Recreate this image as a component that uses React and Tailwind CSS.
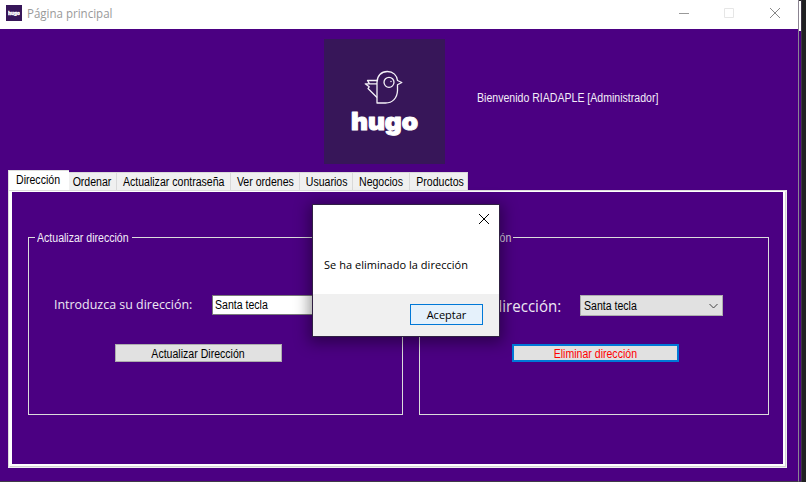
const tabs = [
  { name: 'Ordenar', width: 'w-[48px] pr-px' },
  { name: 'Actualizar contraseña', width: 'w-[114px]' },
  { name: 'Ver ordenes', width: 'w-[69px]' },
  { name: 'Usuarios', width: 'w-[53px] pl-[2px]' },
  { name: 'Negocios', width: 'w-[57px]' },
  { name: 'Productos', width: 'w-[58px] pl-[3px]' },
];

// Condensed lettering of the classic desktop controls.
function Narrow({ children, origin = 'origin-center' }) {
  return <span className={`inline-block scale-x-[0.88] whitespace-nowrap ${origin}`}>{children}</span>;
}

function TitleBar() {
  return (
    <header className="flex h-[29px] shrink-0 items-center bg-white pl-[6px] font-['Open_Sans',sans-serif]">
      <span className="mb-[3px] flex size-[16px] items-center justify-center bg-[#371659]">
        <svg width="12" height="6" viewBox="0 0 12 6" aria-hidden="true">
          <text x="0" y="4.500" textLength="12" lengthAdjust="spacingAndGlyphs" fill="#fff" stroke="#fff" strokeWidth=".3" fontSize="4.500" fontWeight="900" fontFamily="Inter">hugo</text>
        </svg>
      </span>
      <span className="mb-[2px] ml-[5px] flex-1 origin-left scale-x-[0.96] text-[12px] leading-[16px] text-[#999]">Página principal</span>
      <svg className="mr-[16px] mb-[3px]" width="103" height="12" viewBox="0 0 103 12" fill="none" aria-hidden="true">
        <path d="M0 6.5h10" stroke="#999" />
        <path d="M45.500 1.500h9v9h-9z" stroke="#e6e6e6" />
        <path d="M91 1l10 10M101 1L91 11" stroke="#888" />
      </svg>
    </header>
  );
}

function Logo() {
  return (
    <div className="ml-[324px] h-[125px] w-[121px] bg-[#371659]">
      <svg width="121" height="125" viewBox="324 39 121 125" fill="none" aria-hidden="true">
        <g stroke="#f5f1f8" strokeWidth="1.3" strokeLinejoin="round">
          <path d="M377 103V82.500c0-6.500 4.200-11 10.300-11 6 0 9.700 4 10.200 9l4.300 2-4.300 2.300v6c-.3 7.200-5 12.200-12 12.200z" />
          <circle cx="389" cy="82.300" r="5" />
          <path d="M377 80.500h-9.500l2 3.300h7.500M369.500 83.800h-4.300l4 3-1.200 1.700 9 9" />
        </g>
        <circle cx="391" cy="81.500" r=".7" fill="#fff" />
        <text x="351" y="129.500" textLength="67" lengthAdjust="spacingAndGlyphs" fill="#fff" stroke="#fff" strokeWidth="1" strokeLinejoin="round" fontSize="24" fontWeight="900" fontFamily="Inter">hugo</text>
      </svg>
    </div>
  );
}

function Dialog() {
  return (
    <div role="dialog" className="absolute top-[204px] left-[312px] flex h-[133px] w-[188px] flex-col border border-[#302043] bg-white font-['Open_Sans',sans-serif] text-black shadow-[0_3px_14px_3px_rgba(0,0,0,0.4)]">
      <div className="flex h-[29px] items-center justify-end pr-[9px]">
        <svg className="mb-px" width="12" height="12" viewBox="0 0 12 12" aria-hidden="true">
          <path d="M1 1l10 10M11 1L1 11" stroke="#000" />
        </svg>
      </div>
      <p className="flex-1 pt-[23px] pl-[11px] text-[11px] leading-[16px] tracking-[0.03px] whitespace-nowrap">Se ha eliminado la dirección</p>
      <div className="flex h-[42px] items-start justify-end bg-[#f0f0f0] pt-[10px] pr-[16px]">
        <button className="h-[21px] w-[73px] border border-[#0078d7] bg-[#e5f1fb] text-[11px] leading-[19px]">Aceptar</button>
      </div>
    </div>
  );
}

export default function App() {
  return (
    <div className="relative flex h-[482px] w-[806px] overflow-hidden bg-[#202022] font-['Liberation_Sans',Arial,sans-serif] text-[12px] leading-[14px]">
      <div className="flex w-[798px] flex-col border-b border-[#403a48] bg-[#4b0082]">
        <TitleBar />
        <div className="mt-[10px] flex h-[125px] shrink-0">
          <Logo />
          <p className="mt-[52px] ml-[32px] whitespace-nowrap text-[#f3edf8]"><Narrow origin="origin-left">Bienvenido RIADAPLE [Administrador]</Narrow></p>
        </div>
        <nav className="mt-[6px] ml-[8px] flex h-[20px] shrink-0 items-end whitespace-nowrap text-black">
          <div className="flex h-[20px] w-[61px] justify-center border-t border-l border-[#dcdcdc] bg-white pt-[2px] pr-[2px]"><Narrow>Dirección</Narrow></div>
          {tabs.map((tab) => (
            <div key={tab.name} className={`flex h-[18px] justify-center border-t border-r border-[#d9d9d9] bg-[#f0f0f0] pt-[2px] ${tab.width}`}><Narrow>{tab.name}</Narrow></div>
          ))}
        </nav>
        <main className="ml-[8px] h-[278px] w-[779px] shrink-0 border border-r-2 border-b-2 border-[#dcdcdc] border-r-[#f0f0f0] border-b-[#f0f0f0]">
          <div className="h-full border-t border-r-2 border-b-2 border-l-[3px] border-white shadow-[1px_1px_0_#d4d4d4]">
            <div className="flex h-full gap-[16px] pt-[39px] pl-[16px]">
              <fieldset className="h-[184px] w-[375px] border border-[#dcdcdc]">
                <legend className="ml-[6px] h-[13px] w-[97px] pl-[2px] whitespace-nowrap text-[#f3edf8]"><Narrow origin="origin-left">Actualizar dirección</Narrow></legend>
                <div className="mt-[51px] flex h-[19px] items-center pl-[25px]">
                  <label className="mb-[2px] w-[158px] font-['Open_Sans',sans-serif] text-[13px] leading-[18px] whitespace-nowrap text-[#eee8f4]">
                    <span className="inline-block origin-left scale-x-[0.957]">Introduzca su dirección:</span>
                  </label>
                  <div className="flex h-[20px] w-[144px] items-center border border-[#7a7a7a] bg-white pl-[2px] text-black"><Narrow origin="origin-left">Santa tecla</Narrow></div>
                </div>
                <button className="mt-[30px] ml-[86px] flex h-[18px] w-[167px] justify-center border border-[#adadad] bg-[#e1e1e1] pt-[2px] text-black"><Narrow>Actualizar Dirección</Narrow></button>
              </fieldset>
              <fieldset className="h-[184px] w-[350px] border border-[#dcdcdc]">
                <legend className="ml-[6px] h-[13px] w-[87px] pl-[2px] whitespace-nowrap text-[#d8cde1]"><Narrow origin="origin-left">Eliminar dirección</Narrow></legend>
                <div className="mt-[51px] flex h-[21px] items-center">
                  <label className="flex w-[141px] justify-end font-['Open_Sans',sans-serif] text-[16px] leading-[20px] whitespace-nowrap text-[#eee8f4]">
                    <span className="inline-block origin-right scale-x-[0.94]">Su dirección:</span>
                  </label>
                  <div className="ml-[19px] flex h-[21px] w-[143px] items-center justify-between border border-[#adadad] bg-[#e1e1e1] pr-[3px] pl-[3px] text-black">
                    <Narrow origin="origin-left">Santa tecla</Narrow>
                    <svg className="mt-px" width="11" height="7" viewBox="0 0 11 7" fill="none" aria-hidden="true"><path d="M1.500 1l4 4 4-4" stroke="#444" /></svg>
                  </div>
                </div>
                <button className="mt-[28px] ml-[92px] flex h-[18px] w-[167px] justify-center border-2 border-[#0078d7] bg-[#e1e1e1] pt-px text-[#ff0000]"><Narrow>Eliminar dirección</Narrow></button>
              </fieldset>
            </div>
          </div>
        </main>
      </div>
      <div className="flex w-[4px] flex-col border-r border-b border-l border-r-[#3b3342] border-b-[#403a48] border-l-[#8b8492] bg-[#4b0082]">
        <div className="h-[31px] border-t border-[#303030] bg-white" />
      </div>
      <Dialog />
    </div>
  );
}
